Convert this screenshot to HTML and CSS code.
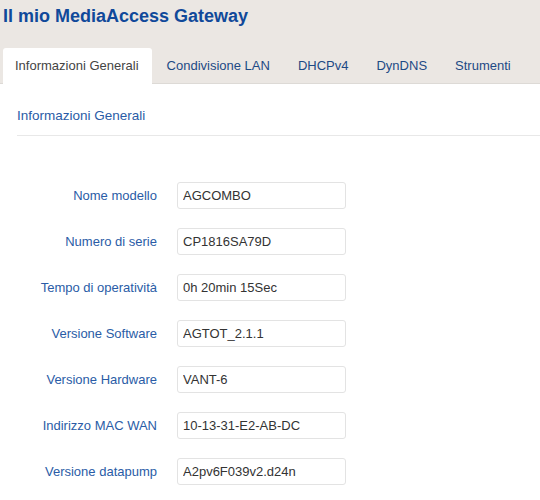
FILE: index.html
```html
<!DOCTYPE html>
<html lang="it">
<head>
<meta charset="utf-8">
<title>Il mio MediaAccess Gateway</title>
<link rel="stylesheet" href="styles.css">
</head>
<body>
<header class="header">
  <h1 class="title">Il mio MediaAccess Gateway</h1>
  <nav class="tabs">
    <a class="tab tab-active">Informazioni Generali</a>
    <a class="tab">Condivisione LAN</a>
    <a class="tab">DHCPv4</a>
    <a class="tab">DynDNS</a>
    <a class="tab">Strumenti</a>
  </nav>
</header>
<main class="content">
  <h2 class="section-title">Informazioni Generali</h2>
  <form class="form">
    <div class="row"><label class="label">Nome modello</label><input class="field" readonly value="AGCOMBO"></div>
    <div class="row"><label class="label">Numero di serie</label><input class="field" readonly value="CP1816SA79D"></div>
    <div class="row"><label class="label">Tempo di operatività</label><input class="field" readonly value="0h 20min 15Sec"></div>
    <div class="row"><label class="label">Versione Software</label><input class="field" readonly value="AGTOT_2.1.1"></div>
    <div class="row"><label class="label">Versione Hardware</label><input class="field" readonly value="VANT-6"></div>
    <div class="row"><label class="label">Indirizzo MAC WAN</label><input class="field" readonly value="10-13-31-E2-AB-DC"></div>
    <div class="row"><label class="label">Versione datapump</label><input class="field" readonly value="A2pv6F039v2.d24n"></div>
  </form>
</main>
</body>
</html>
```

FILE: styles.css
```css
html, body {
  margin: 0;
  padding: 0;
  background: #ffffff;
  font-family: "Liberation Sans", Arial, sans-serif;
}

.header {
  background: #ebe7e3;
  border-bottom: 1px solid #dddad6;
  padding: 0 3px;
}

.title {
  margin: 0;
  padding: 6px 0 22px 0;
  font-size: 18px;
  line-height: 20px;
  font-weight: bold;
  color: #10499a;
}

.tabs {
  display: flex;
  gap: 3px;
  margin-bottom: -1px;
}

.tab {
  display: block;
  height: 35px;
  line-height: 35px;
  padding: 0 13px 0 12px;
  font-size: 13px;
  color: #1d4a85;
  border-radius: 3px 3px 0 0;
}

.tab-active {
  background: #ffffff;
  color: #444444;
  height: 36px;
}

.content {
  padding: 22px 0 20px 17px;
}

.section-title {
  margin: 0;
  padding-bottom: 9px;
  font-size: 13.5px;
  line-height: 20px;
  font-weight: normal;
  color: #2a5ca6;
  border-bottom: 1px solid #e8e8e8;
}

.form {
  margin: 46px 0 0 0;
  display: flex;
  flex-direction: column;
  gap: 19px;
}

.row {
  display: flex;
  align-items: center;
  gap: 20px;
}

.label {
  width: 140px;
  text-align: right;
  font-size: 13px;
  line-height: 27px;
  color: #2a5ca6;
}

.field {
  box-sizing: border-box;
  width: 169px;
  height: 27px;
  margin: 0;
  padding: 0 5px;
  border: 1px solid #e3e3e3;
  border-radius: 3px;
  font-family: "Liberation Sans", Arial, sans-serif;
  font-size: 13px;
  color: #333333;
  background: #ffffff;
  outline: none;
}
```
